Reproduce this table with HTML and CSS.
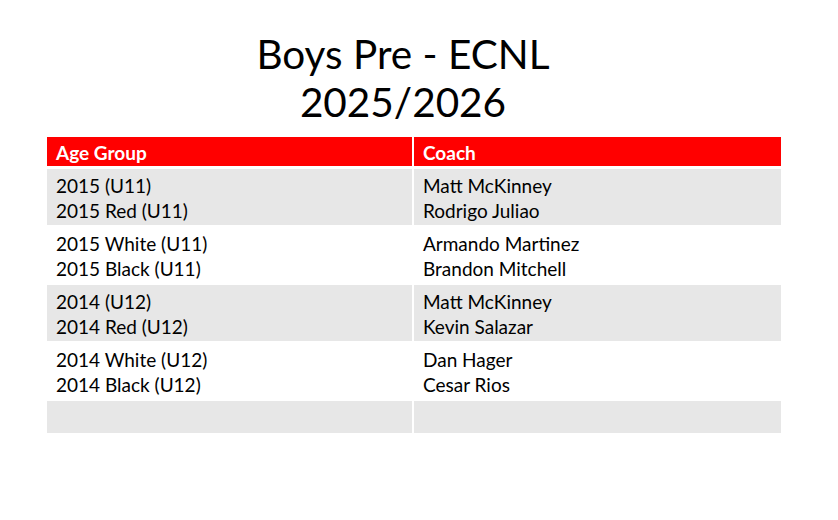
FILE: index.html
```html
<!DOCTYPE html>
<html>
<head>
<meta charset="utf-8">
<link rel="stylesheet" href="styles.css">
</head>
<body>
<div class="slide">
  <h1 class="title">Boys Pre - ECNL<br>2025/2026</h1>
  <div class="table">
    <div class="cell head">Age Group</div>
    <div class="cell head">Coach</div>
    <div class="cell gray">2015 (U11)<br>2015 Red (U11)</div>
    <div class="cell gray">Matt McKinney<br>Rodrigo Juliao</div>
    <div class="cell white">2015 White (U11)<br>2015 Black (U11)</div>
    <div class="cell white">Armando Martinez<br>Brandon Mitchell</div>
    <div class="cell gray">2014 (U12)<br>2014 Red (U12)</div>
    <div class="cell gray">Matt McKinney<br>Kevin Salazar</div>
    <div class="cell white">2014 White (U12)<br>2014 Black (U12)</div>
    <div class="cell white">Dan Hager<br>Cesar Rios</div>
    <div class="cell gray empty"></div>
    <div class="cell gray empty"></div>
  </div>
</div>
</body>
</html>
```

FILE: styles.css
```css
html, body {
  margin: 0;
  padding: 0;
  background: #ffffff;
}
.slide {
  width: 838px;
  height: 520px;
  font-family: Lato, "Open Sans", sans-serif;
  color: #000;
  overflow: hidden;
}
.title {
  margin: 0;
  padding-top: 30px;
  padding-right: 32px;
  font-weight: 400;
  font-size: 40.5px;
  line-height: 48px;
  text-align: center;
}
.table {
  margin: 11px 0 0 47px;
  width: 734px;
  display: grid;
  grid-template-columns: 365px 1fr;
  grid-template-rows: 30px 56px 56px 56px 56px 32px;
  column-gap: 2px;
  row-gap: 2px;
}
.cell {
  padding: 4px 8px 0 9px;
  font-size: 19px;
  line-height: 25px;
}
.head {
  background: #ff0000;
  color: #fff;
  font-weight: 700;
  font-size: 19px;
  line-height: 20px;
  padding-top: 6px;
  margin-bottom: 1px;
}
.gray { background: #e7e7e7; }
.white { background: #ffffff; }
```
